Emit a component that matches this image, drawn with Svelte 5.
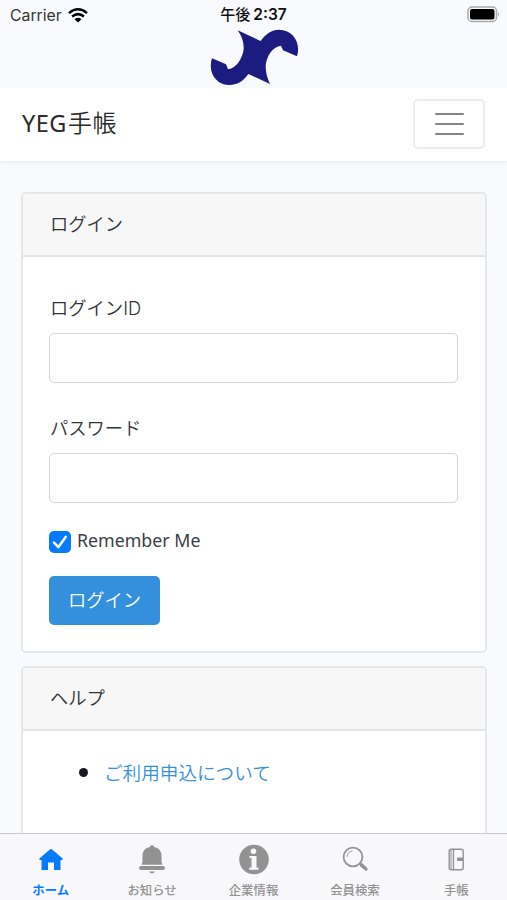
<script>
  const tabs = [
    { id: 'home', label: 'ホーム' },
    { id: 'bell', label: 'お知らせ' },
    { id: 'info', label: '企業情報' },
    { id: 'search', label: '会員検索' },
    { id: 'book', label: '手帳' }
  ];
  let active = $state('home');
  let remember = $state(true);
</script>

<div class="screen">
  <header class="top">
    <div class="status">
      <div class="carrier">
        <span>Carrier</span>
        <svg width="20" height="15" viewBox="0 0 20 15">
          <g fill="none" stroke="#000" stroke-width="2.5">
            <path d="M1 5.1Q10-2.5 19 5.1" />
            <path d="M4.1 8.5Q10 3.8 15.9 8.5" />
          </g>
          <path d="M6.5 11.2Q10 8.4 13.5 11.2L10 14.6Z" />
        </svg>
      </div>
      <div class="time">午後<span>2:37</span></div>
      <svg class="battery" width="33" height="17" viewBox="0 0 33 17">
        <rect x="1" y="1" width="28.5" height="14.5" rx="4" fill="none" stroke="#aaa" stroke-width="1.5" />
        <rect x="3" y="3" width="24.5" height="10.5" rx="2" />
        <path d="M31 6Q33 8.3 31 10.5Z" fill="#aaa" />
      </svg>
    </div>
    <svg class="logo" width="90" height="58" viewBox="45 83 270 174">
      <path fill="#1c1b80" d="M128 90L197 122C212 101 230 88 252 88C292 88 319 125 306 168L264 150L258 136C233 138 213 170 212 197C212 217 217 235 225 251L160 221C145 243 125 254 104 254C64 254 37 217 51 174L93 192L99 207C125 204 143 173 146 146C147 125 140 107 128 90Z" />
    </svg>
  </header>

  <nav class="navbar">
    <span class="brand">YEG<span>手帳</span></span>
    <button class="toggler" aria-label="menu"><i></i><i></i><i></i></button>
  </nav>

  <main>
    <section class="card login">
      <h2>ログイン</h2>
      <form onsubmit={(e) => e.preventDefault()}>
        <label for="user">ログイン<span class="latin">ID</span></label>
        <input id="user" type="text" />
        <label for="pass">パスワード</label>
        <input id="pass" type="password" />
        <label class="check">
          <input type="checkbox" bind:checked={remember} />
          <svg width="22" height="22" viewBox="0 0 22 22">
            <rect width="22" height="22" rx="5" fill="#047aff" />
            {#if remember}
              <path d="M5 11.6L9.3 16.2L16.8 5.7" fill="none" stroke="#fff" stroke-width="2.5" stroke-linecap="round" stroke-linejoin="round" />
            {/if}
          </svg>
          <span>Remember Me</span>
        </label>
        <button class="submit">ログイン</button>
      </form>
    </section>

    <section class="card help">
      <h2>ヘルプ</h2>
      <ul>
        <li><a href="#help">ご利用申込について</a></li>
      </ul>
    </section>
  </main>

  <footer>
    {#each tabs as tab}
      <button class="tab" class:active={active === tab.id} onclick={() => (active = tab.id)}>
        <svg width="34" height="34" viewBox="0 0 34 34" fill="currentColor">
          {#if tab.id === 'home'}
            <path d="M16.2 7.3Q17 6.6 17.8 7.3L28.6 16.6Q29 17.9 28 17.9H26.5V27.9H20V20.5H14V27.9H7.5V17.9H6Q5 17.9 5.4 16.6Z" />
          {:else if tab.id === 'bell'}
            <path d="M15 5a2 2 0 0 1 4 0C24.5 6 26.5 9.5 26.5 14V20L27.5 22.8H6.5L7.5 20V14C7.5 9.5 9.5 6 15 5Z" />
            <rect x="4" y="24" width="26" height="4" rx="2" />
            <path d="M14 29.5H20Q17 33.5 14 29.5Z" />
          {:else if tab.id === 'info'}
            <circle cx="17" cy="17.5" r="14.8" />
            <circle cx="16.5" cy="9.3" r="2.8" fill="#f8f8fa" />
            <path d="M12.5 14H19.5V25.5H21.5V27.8H12.3V25.5H14.5V16H12.5Z" fill="#f8f8fa" />
          {:else if tab.id === 'search'}
            <circle cx="15" cy="15" r="9.4" fill="none" stroke="currentColor" stroke-width="1.8" />
            <path d="M9.2 14.8Q9.5 9.5 14.5 9" fill="none" stroke="currentColor" stroke-width="1" />
            <path d="M21.5 22L24 21L29.3 26Q30.3 28 28.3 29.2L22 24.2Z" />
          {:else}
            <rect x="10.2" y="7.2" width="14" height="20.5" rx="2" fill="none" stroke="currentColor" stroke-width="1.4" />
            <path d="M11 8H13.3V27H11Z" opacity=".5" />
            <path d="M14.5 7V27.5" stroke="currentColor" stroke-width="1.2" />
            <rect x="18" y="15.5" width="6" height="3.5" rx="1" />
          {/if}
        </svg>
        <span>{tab.label}</span>
      </button>
    {/each}
  </footer>
</div>

<style>
  :global(body) {
    background: #f8fafc;
  }
  * {
    box-sizing: border-box;
  }
  .screen {
    height: 900px;
    width: 507px;
    display: flex;
    flex-direction: column;
    overflow: hidden;
    background: #f9fafd;
    color: #303438;
    font-family: 'Noto Sans CJK JP', sans-serif;
    font-size: 18.3px;
    font-weight: 350;
  }
  button {
    font-family: inherit;
  }
  .top {
    height: 88px;
    flex: none;
    display: flex;
    flex-direction: column;
    align-items: center;
    background: #f9fafe;
  }
  .status {
    width: 100%;
    height: 28px;
    padding: 0 7px 0 10px;
    display: grid;
    grid-template-columns: 1fr auto 1fr;
    align-items: center;
  }
  .carrier {
    display: flex;
    align-items: center;
    gap: 6px;
    padding-top: 1px;
    font: 400 15.8px Inter, sans-serif;
    color: #333;
  }
  .time {
    font-size: 15px;
    font-weight: 500;
    color: #111;
    line-height: 28px;
    margin-left: -3px;
  }
  .time span {
    font-family: Inter, sans-serif;
    font-weight: 600;
    font-size: 15.5px;
    margin-left: 3px;
  }
  .battery {
    justify-self: end;
  }
  .logo {
    margin: -0.4px 0 0 3px;
  }
  .navbar {
    height: 73px;
    flex: none;
    padding: 0 22px 2px;
    display: flex;
    align-items: center;
    justify-content: space-between;
    background: #fff;
    box-shadow: 0 2px 4px rgba(0, 0, 0, 0.06);
  }
  .brand {
    font-family: 'Noto Sans', 'Noto Sans CJK JP', sans-serif;
    font-size: 23.5px;
    line-height: 32px;
    font-weight: 400;
    color: #2a2a2a;
    letter-spacing: 0.5px;
    margin-top: -2px;
  }
  .brand span {
    font-family: 'Noto Sans CJK JP', sans-serif;
    font-size: 24px;
    font-weight: 350;
    margin-left: 1px;
  }
  .toggler {
    width: 72px;
    height: 50px;
    padding: 0;
    display: flex;
    flex-direction: column;
    align-items: center;
    justify-content: center;
    gap: 8px;
    background: #fff;
    border: 2px solid #ececec;
    border-radius: 5px;
  }
  .toggler i {
    width: 29px;
    height: 2px;
    border-radius: 1px;
    background: #858585;
  }
  main {
    flex: 1;
    min-height: 0;
    overflow: hidden;
    padding: 31px 20px 0 21px;
    display: flex;
    flex-direction: column;
    gap: 13px;
  }
  .card {
    flex: none;
    border: 2px solid #e6e7e9;
    border-radius: 5px;
    background: #fff;
    overflow: hidden;
  }
  .login {
    height: 461px;
  }
  .help {
    height: 240px;
  }
  h2 {
    margin: 0;
    height: 63px;
    padding: 0 27px;
    font-size: 18.3px;
    font-weight: 350;
    line-height: 58px;
    background: #f7f7f7;
    border-bottom: 2px solid #e3e4e6;
  }
  form {
    padding: 36px 26px 0;
    display: flex;
    flex-direction: column;
    align-items: stretch;
  }
  label {
    height: 30px;
    line-height: 28px;
    margin-bottom: 10px;
    padding-left: 1px;
  }
  .latin {
    font-family: Inter, sans-serif;
  }
  form input:not([type='checkbox']) {
    height: 50px;
    width: 409px;
    padding: 0 14px;
    margin-bottom: 30px;
    border: 1.5px solid #d3d6da;
    border-radius: 5px;
    background: #fff;
    font-size: 18px;
  }
  .check {
    display: flex;
    align-items: center;
    gap: 6px;
    height: 30px;
    margin: -7px 0 20px;
    padding: 0;
    font: 400 17.8px/30px 'Noto Sans', sans-serif;
    color: #3b3e42;
  }
  .check span {
    margin-top: -3px;
  }
  .check input {
    position: absolute;
    opacity: 0;
  }
  .check svg {
    margin-top: 1px;
  }
  .submit {
    width: 111px;
    height: 49px;
    padding: 0 0 3px;
    border: 0;
    border-radius: 5px;
    background: #3490dc;
    color: #fff;
    font-size: 18.3px;
    font-weight: 350;
  }
  ul {
    margin: 0;
    padding: 26px 28px 0 82px;
    list-style: none;
  }
  li {
    display: flex;
    align-items: center;
    height: 30px;
    margin-left: -26px;
    gap: 16px;
  }
  li::before {
    content: '';
    width: 9px;
    height: 9px;
    border-radius: 50%;
    background: #17191c;
  }
  a {
    color: #3490dc;
    text-decoration: none;
    font-size: 18.6px;
    margin-top: -1px;
  }
  footer {
    height: 67px;
    flex: none;
    display: flex;
    border-top: 1.5px solid #c9c9cb;
    background: #f8f8fa;
  }
  .tab {
    flex: 1;
    padding: 8px 0 0;
    display: flex;
    flex-direction: column;
    align-items: center;
    border: 0;
    background: none;
    color: #929292;
  }
  .tab span {
    font-size: 12.4px;
    font-weight: 500;
    line-height: 18px;
    margin-top: 5px;
  }
  .tab.active {
    color: #047aff;
  }
  .tab.active span {
    font-weight: 700;
  }
</style>
